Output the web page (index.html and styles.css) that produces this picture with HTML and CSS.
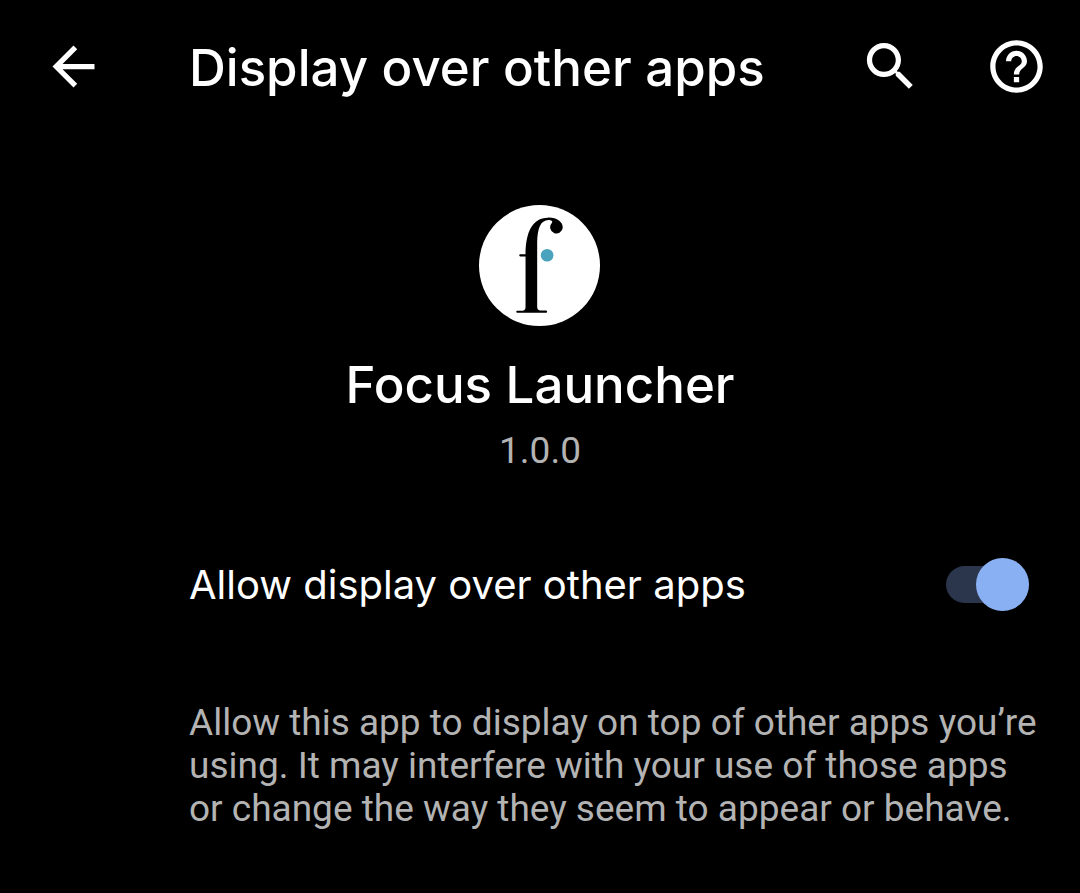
FILE: index.html
```html
<!DOCTYPE html>
<html lang="en">
<head>
<meta charset="utf-8">
<meta name="viewport" content="width=device-width, initial-scale=1">
<title>Display over other apps</title>
<link rel="stylesheet" href="styles.css">
</head>
<body>
<header class="app-bar">
  <button class="icon-button" type="button" aria-label="Back">
    <svg class="icon" viewBox="0 0 24 24" aria-hidden="true"><path d="M20 11H7.83l5.59-5.59L12 4l-8 8 8 8 1.41-1.41L7.83 13H20v-2z"/></svg>
  </button>
  <h1 class="title">Display over other apps</h1>
  <div class="actions">
    <button class="icon-button" type="button" aria-label="Search">
      <svg class="icon" viewBox="0 0 24 24" aria-hidden="true"><path d="M15.5 14h-.79l-.28-.27C15.41 12.59 16 11.11 16 9.5 16 5.91 13.09 3 9.5 3S3 5.91 3 9.5 5.91 16 9.5 16c1.61 0 3.09-.59 4.23-1.57l.27.28v.79l5 4.99L20.49 19l-4.99-5zm-6 0C7.01 14 5 11.99 5 9.5S7.01 5 9.5 5 14 7.01 14 9.5 11.99 14 9.5 14z"/></svg>
    </button>
    <button class="icon-button" type="button" aria-label="Help">
      <svg class="icon" viewBox="0 0 24 24" aria-hidden="true"><path d="M11 18h2v-2h-2v2zm1-16C6.48 2 2 6.48 2 12s4.48 10 10 10 10-4.480 10-10S17.520 2 12 2zm0 18c-4.410 0-8-3.590-8-8s3.590-8 8-8 8 3.590 8 8-3.590 8-8 8zm0-14c-2.210 0-4 1.790-4 4h2c0-1.100.9-2 2-2s2 .9 2 2c0 2-3 1.750-3 5h2c0-2.250 3-2.500 3-5 0-2.210-1.790-4-4-4z"/></svg>
    </button>
  </div>
</header>
<main>
  <section class="app-info">
    <svg class="logo" viewBox="0 0 364 364" role="img" aria-label="Focus Launcher logo">
      <circle cx="182" cy="182" r="182" fill="#fff"/>
      <path d="M140 150C140 82 160 39 207 38C234 37 252 51 252 68A19 19 0 1 1 219 54C222 50 220 46 211 45C184 44 176 72 175 112V307Q175 316 183 317H202Q205 318 205 321T202 324H115Q112 324 112 321T115 318H132Q140 317 140 307V155H124Q121 154 121 151T124 148H140Z"/>
      <circle cx="205" cy="151" r="19" fill="#4aa3bd"/>
    </svg>
    <h2 class="app-name">Focus Launcher</h2>
    <p class="version">1.0.0</p>
  </section>
  <section class="preference">
    <label class="preference-label" for="overlay">Allow display over other apps</label>
    <input class="switch" id="overlay" type="checkbox" role="switch" checked>
  </section>
  <p class="description">Allow this app to display on top of other apps you’re using. It may interfere with your use of those apps or change the way they seem to appear or behave.</p>
</main>
</body>
</html>
```

FILE: styles.css
```css
* {
  box-sizing: border-box;
}

body {
  margin: 0;
  background: #000;
  color: #fff;
  font-family: Roboto, "Liberation Sans", sans-serif;
}

h1,
h2,
p {
  margin: 0;
}

.app-bar {
  display: flex;
  align-items: center;
  padding: 35px 32px 37px 42px;
}

.icon-button {
  display: block;
  flex: none;
  padding: 0;
  border: 0;
  background: none;
  color: inherit;
}

.icon {
  display: block;
  width: 63px;
  height: 63px;
  fill: currentColor;
}

.title {
  flex: 1;
  margin-left: 84px;
  padding-top: 3px;
  font-family: Inter, sans-serif;
  font-size: 51px;
  font-weight: 500;
  line-height: 60px;
}

.actions {
  display: flex;
  gap: 63px;
}

.app-info {
  display: flex;
  flex-direction: column;
  align-items: center;
  padding-top: 70px;
}

.logo {
  width: 121px;
  height: 121px;
  margin-right: 2px;
}

.app-name {
  margin-top: 27px;
  font-family: Inter, sans-serif;
  font-size: 51px;
  font-weight: 500;
  line-height: 64px;
}

.version {
  margin-top: 12px;
  color: #b3b3b3;
  font-size: 37px;
  line-height: 43px;
}

.preference {
  display: flex;
  align-items: center;
  justify-content: space-between;
  padding: 86px 51px 90px 189px;
}

.preference-label {
  font-family: Inter, sans-serif;
  font-size: 40px;
  line-height: 53px;
}

.switch {
  appearance: none;
  display: flex;
  align-items: center;
  justify-content: flex-end;
  flex: none;
  width: 83px;
  height: 37px;
  margin: 0;
  border-radius: 19px;
  background: #2b364c;
}

.switch::before {
  content: "";
  flex: none;
  width: 53px;
  height: 53px;
  border-radius: 50%;
  background: #8ab0f4;
}

.description {
  padding: 0 32px 64px 189px;
  color: #b3b3b3;
  font-size: 37px;
  line-height: 43px;
}
```
